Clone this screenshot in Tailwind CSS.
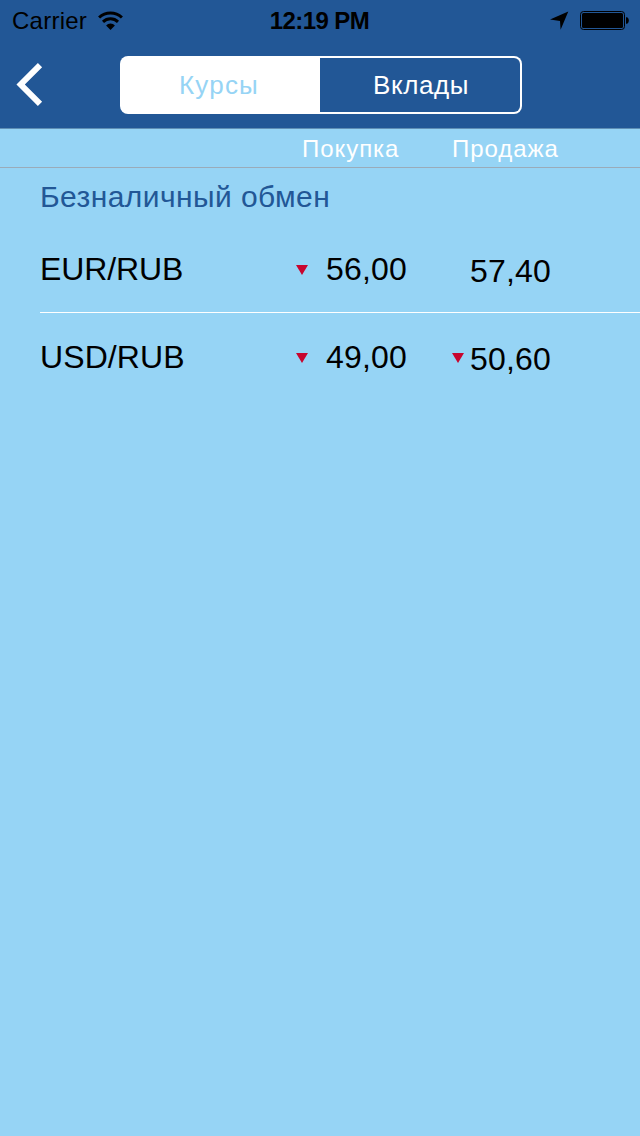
<!DOCTYPE html>
<html lang="ru">
<head>
  <meta charset="UTF-8" />
  <meta name="viewport" content="width=device-width, initial-scale=1.0"/>
  <title>Курсы</title>
  <script src="https://cdn.jsdelivr.net/npm/@tailwindcss/browser@4"></script>
</head>
<body class="bg-[#96d4f5] font-['Liberation_Sans',Arial,sans-serif] text-black min-h-screen">

<!-- Header -->
<header class="h-[129px] bg-[#225796] border-b border-[#5f8fb5]">

  <!-- Status bar -->
  <div class="h-10 grid grid-cols-3 items-center pt-0.5 pl-3 pr-[11px] text-2xl">
    <div class="flex items-center gap-[11px]">
      <span class="tracking-[0.25px]">Carrier</span>
      <svg class="w-[25px] h-[19px] mb-0.5" viewBox="0 0 25 19" fill="none" stroke="#000" stroke-width="3">
        <path d="M1.1 6.5a16.5 16.5 0 0 1 22.8 0" />
        <path d="M5 10.8a11 11 0 0 1 15 0" />
        <path d="M8.1 14.4a6 6 0 0 1 8.8 0L12.5 18.9z" fill="#000" stroke="none" />
      </svg>
    </div>
    <span class="text-center font-bold tracking-[-0.6px] -ml-0.5">12:19 PM</span>
    <div class="flex items-center justify-end gap-[11px]">
      <svg class="w-[19px] h-[19px] mb-0.5" viewBox="0 0 19 19"><path d="M18.3 0.6 10.6 18.8 10 10 0 8.6z" /></svg>
      <svg class="w-[49px] h-5" viewBox="0 0 49 20">
        <rect x="0.5" y="0.5" width="44" height="18" rx="3" fill="none" stroke="#000" />
        <rect x="2" y="2" width="41" height="15" rx="1.5" />
        <path d="M46 6.2h1c2.4.6 2.4 6 0 6.6h-1z" />
      </svg>
    </div>
  </div>

  <!-- Nav bar -->
  <div class="flex items-center h-[88px] pl-4">
    <button class="w-[104px]" aria-label="Назад">
      <svg class="w-[27px] h-[43px]" viewBox="0 0 27 43" fill="none" stroke="#fff" stroke-width="6">
        <path d="M24 2.2 4.7 21.5 24 40.8" />
      </svg>
    </button>
    <div class="flex w-[402px] h-[58px] p-0.5 bg-white rounded-lg text-[26px] mt-0.5">
      <button class="w-[198px] pr-1 text-[#96d4f5] tracking-[1.2px]">Курсы</button>
      <button class="flex-1 pl-0.5 bg-[#225796] rounded-r-md text-white tracking-[0.6px]">Вклады</button>
    </div>
  </div>
</header>

<!-- Column titles -->
<div class="flex h-[39px] border-b border-[#9aabb9] pl-[302px] pt-0.5 text-2xl leading-9 text-white tracking-[0.95px]">
  <span class="w-[150px]">Покупка</span>
  <span>Продажа</span>
</div>

<!-- Rates -->
<main class="pl-10">
  <h2 class="h-[57px] pt-[9px] text-[30px] leading-10 text-[#225796] tracking-[0.43px]">Безналичный обмен</h2>

  <div class="flex h-[88px] pt-6 text-[32px] leading-10 border-b border-white">
    <span class="w-64 tracking-[-0.1px]">EUR/RUB</span>
    <svg class="w-3 h-2.5 mt-4 mr-[18px]" viewBox="0 0 12 10" fill="#c8052e"><path d="M0 0h12L6 10z" /></svg>
    <span class="w-[126px] tracking-[0.2px]">56,00</span>
    <span class="ml-[18px] pt-0.5 tracking-[0.2px]">57,40</span>
  </div>

  <div class="flex h-[88px] pt-6 text-[32px] leading-10">
    <span class="w-64 tracking-[0.1px]">USD/RUB</span>
    <svg class="w-3 h-2.5 mt-4 mr-[18px]" viewBox="0 0 12 10" fill="#c8052e"><path d="M0 0h12L6 10z" /></svg>
    <span class="w-[126px] tracking-[0.2px]">49,00</span>
    <svg class="w-3 h-2.5 mt-4 mr-1.5" viewBox="0 0 12 10" fill="#c8052e"><path d="M0 0h12L6 10z" /></svg>
    <span class="pt-0.5 tracking-[0.2px]">50,60</span>
  </div>
</main>

</body>
</html>
